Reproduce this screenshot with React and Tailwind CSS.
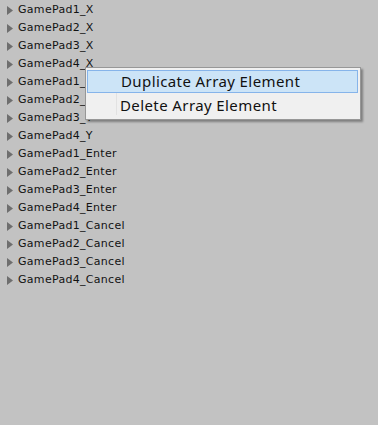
const rows = [
  "GamePad1_X",
  "GamePad2_X",
  "GamePad3_X",
  "GamePad4_X",
  "GamePad1_Y",
  "GamePad2_Y",
  "GamePad3_Y",
  "GamePad4_Y",
  "GamePad1_Enter",
  "GamePad2_Enter",
  "GamePad3_Enter",
  "GamePad4_Enter",
  "GamePad1_Cancel",
  "GamePad2_Cancel",
  "GamePad3_Cancel",
  "GamePad4_Cancel",
];

function Row({ label }) {
  return (
    <div className="flex items-center h-[18px] pl-[7px]">
      <svg width="6" height="9" viewBox="0 0 6 9" className="shrink-0">
        <polygon points="0,0 6,4.5 0,9" fill="#6e6e6e" />
      </svg>
      <span className="ml-[5px] text-[11px] text-[#121212] tracking-[0.3px]">{label}</span>
    </div>
  );
}

export default function App() {
  return (
    <div className="relative w-[378px] h-[425px] bg-[#c2c2c2] font-['Verdana','DejaVu_Sans',sans-serif] overflow-hidden">
      {/* lista de elementos */}
      <div className="flex flex-col pt-[1px]">
        {rows.map((r) => (
          <Row key={r} label={r} />
        ))}
      </div>

      {/* menu de contexto */}
      <div className="absolute left-[85px] top-[67px] w-[276px] h-[53px] bg-[#f0f0f0] border border-[#979797] shadow-[2px_2px_2px_rgba(0,0,0,0.35)] pt-[2px] pl-[1px] pr-[2px]">
        <div className="absolute left-[30px] top-[2px] bottom-[4px] w-px bg-[#e2e2e2]" />
        <div className="relative flex items-center h-[23px] bg-[#cce4f7] border border-[#86b4ea] pl-[33px] text-[15px] tracking-[0.4px] text-[#111] font-['Noto_Sans','Open_Sans',sans-serif]">
          Duplicate Array Element
        </div>
        <div className="relative flex items-center h-[25px] pl-[33px] text-[15px] tracking-[0.4px] text-[#111] font-['Noto_Sans','Open_Sans',sans-serif]">
          Delete Array Element
        </div>
      </div>
    </div>
  );
}
